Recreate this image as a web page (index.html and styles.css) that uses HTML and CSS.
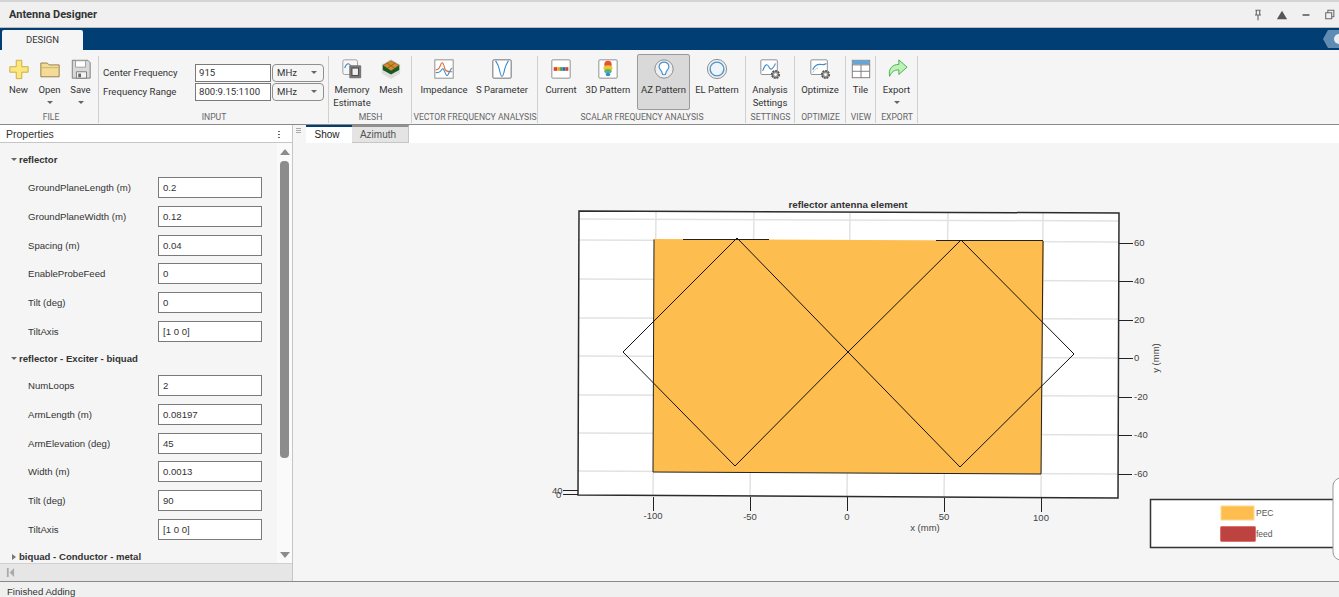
FILE: index.html
```html
<!DOCTYPE html>
<html lang="en">
<head>
<meta charset="utf-8">
<title>Antenna Designer</title>
<link rel="stylesheet" href="styles.css">
</head>
<body>
<div class="app">
  <header class="titlebar">
    <span class="title">Antenna Designer</span>
    <div class="winbtns">
      <svg class="wb" viewBox="0 0 14 14"><path d="M4 1.500h6M5 1.500v5M9 1.500v5M3.500 7h7M7 7v6" fill="none" stroke="#666" stroke-width="1.300"/></svg>
      <svg class="wb" viewBox="0 0 14 14"><path d="M7 2l6 10H1z" fill="#555"/></svg>
      <svg class="wb" viewBox="0 0 14 14"><path d="M3 7h8" stroke="#666" stroke-width="2"/></svg>
      <svg class="wb" viewBox="0 0 14 14"><path d="M4.500 4V1.500h7V9H9M2 4.500h7v7H2z" fill="none" stroke="#666" stroke-width="1.200"/></svg>
    </div>
  </header>
  <div class="tabstrip">
    <div class="tab-design">DESIGN</div>
    <svg class="expander" viewBox="0 0 16 18"><path d="M5 0h11v18H5L0 9z" fill="#5f8cb0"/><circle cx="16" cy="9" r="5" fill="#e8eef3"/></svg>
  </div>

  <div class="toolstrip">
    <section class="group g-file">
      <div class="tools">
        <div class="tool w31"><svg class="ic" viewBox="0 0 24 24"><path d="M9 2.500h6v7h7v6h-7v7H9v-7H2v-6h7z" fill="#fbe77d" stroke="#c9a93f"/></svg><span>New</span></div>
        <div class="tool w31"><svg class="ic" viewBox="0 0 24 24"><path d="M2 5.500h7l2 2h11v13H2z" fill="#f4dc96" stroke="#8d7b46"/><path d="M2 10.500h20" stroke="#c9b16a"/></svg><span>Open</span><i class="caret"></i></div>
        <div class="tool w31"><svg class="ic" viewBox="0 0 24 24"><path d="M2.500 2.500h17l2.500 2.500v17H2.500z" fill="#d9d9d9" stroke="#777"/><path d="M6 3h11v7H6z" fill="#fff" stroke="#999"/><path d="M7 15h11v7H7z" fill="#f3f3f3" stroke="#777"/><path d="M9 17h3v4H9z" fill="#666"/></svg><span>Save</span><i class="caret"></i></div>
      </div>
      <div class="glabel">FILE</div>
    </section>
    <section class="group g-input">
      <div class="form">
        <label class="flabel">Center Frequency</label><div class="finput">915</div><div class="fselect">MHz<i class="caret"></i></div>
        <label class="flabel">Frequency Range</label><div class="finput">800:9.15:1100</div><div class="fselect">MHz<i class="caret"></i></div>
      </div>
      <div class="glabel">INPUT</div>
    </section>
    <section class="group g-mesh">
      <div class="tools">
        <div class="tool w46"><svg class="ic" viewBox="0 0 24 24"><rect x="2" y="2" width="16" height="16" rx="2" fill="#f7f7f7" stroke="#999"/><path d="M4 11c2-6 5-6 7-2s3 2 5 0" fill="none" stroke="#3d8ccb" stroke-width="1.200"/><rect x="9" y="8" width="13" height="14" rx="1" fill="#777"/><rect x="12" y="11" width="7" height="8" fill="#f0f0f0" stroke="#444"/></svg><span>Memory<br>Estimate</span></div>
        <div class="tool w32"><svg class="ic" viewBox="0 0 24 24"><path d="M12 1l10 6v10l-10 6-10-6V7z" fill="#ddd"/><path d="M3 8l9-5 9 5-9 6z" fill="#d38a2c" stroke="#6f4a14" stroke-width=".6"/><path d="M3 8v5l9 5 9-5V8l-9 6z" fill="#165c22"/><path d="M7.500 5.500l9 6M16.500 5.500l-9 6" stroke="#6f4a14" stroke-width=".6"/></svg><span>Mesh</span></div>
      </div>
      <div class="glabel">MESH</div>
    </section>
    <section class="group g-vector">
      <div class="tools">
        <div class="tool w64"><svg class="ic" viewBox="0 0 24 24"><rect x="2" y="2" width="20" height="20" fill="#fff" stroke="#888"/><path d="M3 13c3 0 4-2 6-7 2-3 3 3 4 6s4 3 8 3" fill="none" stroke="#e2703a" stroke-width="1.200"/><path d="M3 16c4 0 5-1 7-4 2-2 3 6 5 7s3-7 6-8" fill="none" stroke="#3d8ccb" stroke-width="1.200"/></svg><span>Impedance</span></div>
        <div class="tool w52"><svg class="ic" viewBox="0 0 24 24"><rect x="2" y="2" width="20" height="20" rx="1" fill="#fff" stroke="#666"/><path d="M5 3c1 2 3 4 4 9s2 8 3 8 2-3 3-8 3-7 4-9" fill="none" stroke="#3d8ccb" stroke-width="1.300"/></svg><span>S Parameter</span></div>
      </div>
      <div class="glabel">VECTOR FREQUENCY ANALYSIS</div>
    </section>
    <section class="group g-scalar">
      <div class="tools">
        <div class="tool w46"><svg class="ic" viewBox="0 0 24 24"><rect x="2" y="2" width="20" height="20" rx="1" fill="#fff" stroke="#888"/><rect x="4" y="10" width="4" height="4" fill="#d8442c"/><rect x="8" y="10" width="3" height="4" fill="#e8a32c"/><rect x="11" y="10" width="3" height="4" fill="#3f9c5a"/><rect x="14" y="10" width="3" height="4" fill="#3365c2"/><rect x="17" y="10" width="3" height="4" fill="#d8442c"/></svg><span>Current</span></div>
        <div class="tool w48"><svg class="ic" viewBox="0 0 24 24"><rect x="2" y="2" width="20" height="20" rx="1" fill="#fff" stroke="#888"/><ellipse cx="12" cy="7" rx="4" ry="4" fill="#e5532d"/><ellipse cx="12" cy="11" rx="5" ry="3" fill="#f2c430"/><ellipse cx="12" cy="14.500" rx="4" ry="2.500" fill="#54b87c"/><ellipse cx="12" cy="18" rx="2.500" ry="2" fill="#3f84d6"/></svg><span>3D Pattern</span></div>
        <div class="tool w53 active"><svg class="ic" viewBox="0 0 24 24"><circle cx="12" cy="12" r="10" fill="#eee" stroke="#888"/><path d="M12 4.500c4.500 0 6 3.500 5 6.500-1 2.500-3 3-3.500 7h-3c-.5-4-2.500-4.500-3.500-7-1-3 .5-6.500 5-6.500z" fill="#fff" stroke="#4a94cf" stroke-width="1.300"/></svg><span>AZ Pattern</span></div>
        <div class="tool w54"><svg class="ic" viewBox="0 0 24 24"><circle cx="12" cy="12" r="10.500" fill="#eee" stroke="#888"/><circle cx="12" cy="12" r="7.500" fill="#eef4fa" stroke="#4a94cf" stroke-width="1.500"/></svg><span>EL Pattern</span></div>
      </div>
      <div class="glabel">SCALAR FREQUENCY ANALYSIS</div>
    </section>
    <section class="group g-settings">
      <div class="tools">
        <div class="tool w48"><svg class="ic" viewBox="0 0 24 24"><rect x="2" y="2" width="18" height="16" rx="1" fill="#fff" stroke="#888"/><path d="M4 14c3-8 5-8 7-4s4 2 7-4" fill="none" stroke="#3d8ccb" stroke-width="1.200"/><circle cx="18" cy="18" r="4" fill="#999" stroke="#555" stroke-width="2" stroke-dasharray="2 1"/><circle cx="18" cy="18" r="1.500" fill="#fff"/></svg><span>Analysis<br>Settings</span></div>
      </div>
      <div class="glabel">SETTINGS</div>
    </section>
    <section class="group g-optimize">
      <div class="tools">
        <div class="tool w50"><svg class="ic" viewBox="0 0 24 24"><rect x="2" y="2" width="18" height="16" rx="1" fill="#fff" stroke="#888"/><path d="M4 13c2-5 5-6 8-6s4 1 7-1" fill="none" stroke="#3d8ccb" stroke-width="1.200"/><path d="M4 16c2-3 4-5 6-5" fill="none" stroke="#a5c8e4"/><circle cx="18" cy="18" r="4" fill="#999" stroke="#555" stroke-width="2" stroke-dasharray="2 1"/><circle cx="18" cy="18" r="1.500" fill="#fff"/></svg><span>Optimize</span></div>
      </div>
      <div class="glabel">OPTIMIZE</div>
    </section>
    <section class="group g-view">
      <div class="tools">
        <div class="tool w29"><svg class="ic" viewBox="0 0 24 24"><rect x="2.500" y="2.500" width="19" height="19" fill="#fff" stroke="#777"/><rect x="3" y="3" width="18" height="4" fill="#5fa6dc"/><path d="M2.500 7.500h19M2.500 14.500h19M12 7.500v14" stroke="#777"/></svg><span>Tile</span></div>
      </div>
      <div class="glabel">VIEW</div>
    </section>
    <section class="group g-export">
      <div class="tools">
        <div class="tool w41"><svg class="ic" viewBox="0 0 24 24"><path d="M14 2l9 8-9 8v-5c-5 0-8 2-10 7-2-8 3-13 10-13z" fill="#bff0b8" stroke="#3fae47"/></svg><span>Export</span><i class="caret"></i></div>
      </div>
      <div class="glabel">EXPORT</div>
    </section>
  </div>

  <main class="main">
    <aside class="panel">
      <div class="panel-head"><span>Properties</span><span class="dots"></span></div>
      <div class="panel-body">
        <div class="props">
          <h3 class="sect"><i class="tri-down"></i>reflector</h3>
          <div class="row"><label>GroundPlaneLength (m)</label><div class="pinput">0.2</div></div>
          <div class="row"><label>GroundPlaneWidth (m)</label><div class="pinput">0.12</div></div>
          <div class="row"><label>Spacing (m)</label><div class="pinput">0.04</div></div>
          <div class="row"><label>EnableProbeFeed</label><div class="pinput">0</div></div>
          <div class="row"><label>Tilt (deg)</label><div class="pinput">0</div></div>
          <div class="row"><label>TiltAxis</label><div class="pinput">[1 0 0]</div></div>
          <h3 class="sect sect2"><i class="tri-down"></i>reflector - Exciter - biquad</h3>
          <div class="row"><label>NumLoops</label><div class="pinput">2</div></div>
          <div class="row"><label>ArmLength (m)</label><div class="pinput">0.08197</div></div>
          <div class="row"><label>ArmElevation (deg)</label><div class="pinput">45</div></div>
          <div class="row"><label>Width (m)</label><div class="pinput">0.0013</div></div>
          <div class="row"><label>Tilt (deg)</label><div class="pinput">90</div></div>
          <div class="row"><label>TiltAxis</label><div class="pinput">[1 0 0]</div></div>
          <h3 class="sect sect3"><i class="tri-right"></i>biquad - Conductor - metal</h3>
        </div>
        <div class="scroll">
          <i class="sc-up"></i>
          <div class="thumb"></div>
          <i class="sc-down"></i>
        </div>
      </div>
      <div class="panel-foot"><svg class="first" viewBox="0 0 10 12"><path d="M1 1h2v10H1zM9 1v10L4 6z" fill="#aaa"/></svg></div>
    </aside>
    <div class="splitter"><i></i></div>
    <div class="doc">
      <div class="doctabs"><div class="dtab on">Show</div><div class="dtab">Azimuth</div></div>
      <div class="canvas">
        <svg class="figure" viewBox="306 143 1033 438">
          <path d="M579 211L1119 213 1118 498 578 495z" fill="#fff"/>
          <g class="grid">
            <path d="M579 219L1119 221M579 240L1119 242M579 279L1119 281M579 318L1119 319M579 356L1119 358M579 395L1118 396M579 433L1118 435M578 471L1118 474"/>
            <path d="M656 212L653 496M754 212L750 497M850 213L847 497M948 213L944 498M1043 213L1041 498"/>
          </g>
          <path d="M654 239L1044 241 1041 474 653 472z" fill="#febd4f"/>
          <path d="M654 239.500L653 472 1041 474 1043 241" fill="none" stroke="#222" stroke-width="1"/>
          <path d="M683 239.500H769M936 240.500H1043" stroke="#222" stroke-width="1" fill="none"/>
          <path d="M623 352L737 238 848 352 961 240 1074 354 960 467 848 352 735 466z" fill="none" stroke="#111" stroke-width="1"/>
          <path d="M579 211L1119 213 1118 498 578 495z" fill="none" stroke="#2b2b2b" stroke-width="1.500"/>
          <g class="ticks">
            <path d="M1119 243.500H1133M1119 281.500H1133M1119 320.500H1133M1119 358.500H1133M1118 397.500H1132M1118 435.500H1132M1118 474.500H1132"/>
            <path d="M653.500 497V511M750.500 497V511M847.500 497V511M944.500 498V512M1041.500 498V512"/>
            <path d="M563 490.500H578M563 494.500H578"/>
          </g>
          <g class="tlab">
            <text x="1134" y="246">60</text><text x="1134" y="284">40</text><text x="1134" y="323">20</text><text x="1134" y="361">0</text>
            <text x="1134" y="400">-20</text><text x="1134" y="438">-40</text><text x="1134" y="477">-60</text>
            <text x="552" y="494">40</text><text x="556" y="498">0</text>
          </g>
          <g class="tlab mid">
            <text x="653" y="519">-100</text><text x="750" y="520">-50</text><text x="847" y="520">0</text><text x="944" y="520">50</text><text x="1041" y="521">100</text>
            <text x="925" y="531">x (mm)</text>
            <text transform="translate(1159 358) rotate(-90)">y (mm)</text>
          </g>
          <text class="ptitle" x="848" y="208">reflector antenna element</text>
          <rect x="1150.500" y="499.500" width="195" height="48" fill="#fff" stroke="#333" stroke-width="1.500"/>
          <rect x="1221" y="506" width="33" height="14" fill="#febd4f" stroke="#ffd98f"/>
          <rect x="1220.500" y="526.500" width="35" height="15" rx="1" fill="#bd4340" stroke="#e0706c"/>
          <text class="leg" x="1256" y="516">PEC</text>
          <text class="leg" x="1256" y="537">feed</text>
          <rect x="1333" y="478" width="30" height="82" rx="8" fill="#fff" stroke="#999"/>
        </svg>
      </div>
    </div>
  </main>
  <footer class="status">Finished Adding</footer>
</div>
</body>
</html>
```
FILE: styles.css
```css
* { box-sizing: border-box; }
html, body { margin: 0; height: 100%; overflow: hidden; }
body { font-family: "Liberation Sans", Arial, sans-serif; font-size: 9.600px; color: #333; background: #f5f5f5; }
.app { display: flex; flex-direction: column; width: 1339px; height: 597px; }

.titlebar { height: 28px; flex: none; display: flex; align-items: center; justify-content: space-between; background: #f0f0f0; border-top: 2px solid #d4d4d4; border-bottom: 1px solid #bdbdbd; padding: 0 3px 0 9px; }
.title { font-family: Roboto, sans-serif; font-weight: 700; font-size: 11px; color: #333; }
.winbtns { display: flex; gap: 12px; }
.wb { width: 12px; height: 12px; display: block; }

.tabstrip { height: 22px; flex: none; background: #003e73; position: relative; padding: 2px 0 0 2px; }
.tab-design { width: 81px; height: 20px; background: #f5f5f5; border-radius: 2px 2px 0 0; text-align: center; line-height: 20px; font-family: Roboto, sans-serif; font-size: 9.500px; color: #333; }
.expander { position: absolute; right: 0; top: 2px; width: 16px; height: 18px; }

.toolstrip { height: 75px; flex: none; display: flex; background: #f5f5f5; border-bottom: 1px solid #8a8a8a; font-family: Roboto, sans-serif; }
.group { display: flex; flex-direction: column; height: 74px; padding-top: 4px; position: relative; }
.group::after { content: ""; position: absolute; right: 0; top: 6px; bottom: 1px; width: 1px; background: #d0d0d0; }
.tools { display: flex; flex: 1; min-height: 0; }
.glabel { height: 11px; line-height: 11px; text-align: center; font-size: 8.600px; color: #666; white-space: nowrap; margin-bottom: 1px; }
.g-file { width: 99px; padding-left: 3px; }
.g-input { width: 230px; }
.g-mesh { width: 83px; }
.g-vector { width: 126px; }
.g-scalar { width: 208px; }
.g-settings { width: 49px; }
.g-optimize { width: 51px; }
.g-view { width: 30px; }
.g-export { width: 42px; }

.tool { display: flex; flex-direction: column; align-items: center; height: 56px; text-align: center; line-height: 13px; padding-top: 4px; white-space: nowrap; flex: none; position: relative; font-size: 9.500px; }
.tool span { display: block; margin-top: 3px; }
.ic { width: 22px; height: 22px; display: block; flex: none; }
.w29 { width: 29px; } .w31 { width: 31px; } .w32 { width: 32px; } .w41 { width: 41px; } .w46 { width: 46px; }
.w48 { width: 48px; } .w50 { width: 50px; } .w52 { width: 52px; } .w53 { width: 53px; } .w54 { width: 54px; } .w64 { width: 64px; }
.active { background: #d9d9d9; border: 1px solid #9a9a9a; border-radius: 2px; margin-left: 5px; padding-top: 3px; }
.caret { display: block; width: 0; height: 0; border-left: 3px solid transparent; border-right: 3px solid transparent; border-top: 3px solid #666; margin-top: 5px; }

.form { flex: 1; display: grid; grid-template-columns: 92px 77px 52px; grid-auto-rows: 18px; row-gap: 1px; padding: 10px 0 0 4px; align-items: stretch; }
.flabel { line-height: 17px; }
.finput { background: #fff; border: 1px solid #7a7a7a; padding-left: 3px; line-height: 16px; margin-right: 1px; }
.fselect { border: 1px solid #8f8f8f; border-radius: 4px; padding-left: 4px; line-height: 16px; position: relative; }
.fselect .caret { position: absolute; right: 6px; top: 1px; }

.main { flex: 1; min-height: 0; display: flex; }
.panel { width: 293px; flex: none; display: flex; flex-direction: column; border-right: 1px solid #c6c6c6; }
.panel-head { height: 18px; flex: none; background: #fff; border-bottom: 1px solid #c6c6c6; display: flex; justify-content: space-between; align-items: center; padding: 0 12px 0 6px; font-size: 10.500px; }
.dots { width: 2px; height: 8px; background: radial-gradient(circle, #666 1px, transparent 1px) 0 0 / 2px 3px; }
.panel-body { flex: 1; min-height: 0; display: flex; overflow: hidden; }
.props { flex: 1; padding-left: 0; }
.sect { margin: 0; font-size: 9.600px; font-weight: 700; height: 14px; line-height: 14px; padding-left: 19px; position: relative; color: #333; }
.props > .sect:first-child { margin-top: 10px; margin-bottom: 10px; }
.sect2 { margin-top: 10px; margin-bottom: 9px; }
.sect3 { margin-top: 10px; }
.tri-down, .tri-right { position: absolute; width: 0; height: 0; }
.tri-down { left: 11px; top: 5px; border-left: 3px solid transparent; border-right: 3px solid transparent; border-top: 3px solid #666; }
.tri-right { left: 12px; top: 4px; border-top: 3px solid transparent; border-bottom: 3px solid transparent; border-left: 4px solid #777; }
.row { display: flex; align-items: center; height: 21px; margin-bottom: 7.800px; padding-left: 28px; }
.row label { width: 130px; flex: none; }
.pinput { width: 104px; height: 21px; background: #fff; border: 1px solid #7a7a7a; padding-left: 4px; line-height: 19px; }
.scroll { width: 15px; flex: none; background: #fafafa; position: relative; display: flex; flex-direction: column; align-items: center; }
.thumb { position: absolute; left: 3px; top: 18px; width: 9px; height: 297px; background: #8c8c8c; border-radius: 4px; }
.sc-up, .sc-down { position: absolute; left: 3px; width: 0; height: 0; border-left: 5px solid transparent; border-right: 5px solid transparent; }
.sc-up { top: 6px; border-bottom: 6px solid #8c8c8c; }
.sc-down { bottom: 5px; border-top: 6px solid #8c8c8c; }
.panel-foot { height: 18px; flex: none; background: #e6e6e6; border-top: 1px solid #d0d0d0; display: flex; align-items: center; padding-left: 6px; }
.first { width: 9px; height: 11px; display: block; }

.splitter { width: 13px; flex: none; background: #f5f5f5; padding: 3px 0 0 3px; }
.splitter i { display: block; width: 5px; height: 5px; background: repeating-linear-gradient(#aaa 0 1px, transparent 1px 2px); }
.doc { flex: 1; min-width: 0; display: flex; flex-direction: column; }
.doctabs { height: 18px; flex: none; display: flex; background: #fff; font-size: 10px; }
.dtab { height: 18px; line-height: 16px; text-align: center; width: 57px; padding-right: 4px; background: #e4e4e4; border-top: 2px solid #8f8f8f; border-right: 1px solid #c6c6c6; border-bottom: 1px solid #c6c6c6; color: #555; }
.dtab.on { width: 46px; background: #fff; border-top-color: #003e73; border-right: none; border-bottom: none; color: #222; }
.canvas { flex: 1; min-height: 0; background: #f5f5f5; }
.figure { display: block; width: 1033px; height: 438px; }
.grid path { stroke: #e2e2e2; stroke-width: 1.500; fill: none; }
.ticks path { stroke: #222; stroke-width: 1; fill: none; }
.tlab text { font-family: "Liberation Sans", Arial, sans-serif; font-size: 9.500px; fill: #444; }
.tlab.mid text { text-anchor: middle; }
.ptitle { font-family: "Liberation Sans", Arial, sans-serif; font-size: 9.800px; font-weight: 700; fill: #333; text-anchor: middle; }
.leg { font-family: "Liberation Sans", Arial, sans-serif; font-size: 8.500px; fill: #555; }

.status { height: 16px; flex: none; background: #f0f0f0; border-top: 1px solid #8a8a8a; padding-left: 7px; line-height: 19px; color: #333; overflow: hidden; }
```
